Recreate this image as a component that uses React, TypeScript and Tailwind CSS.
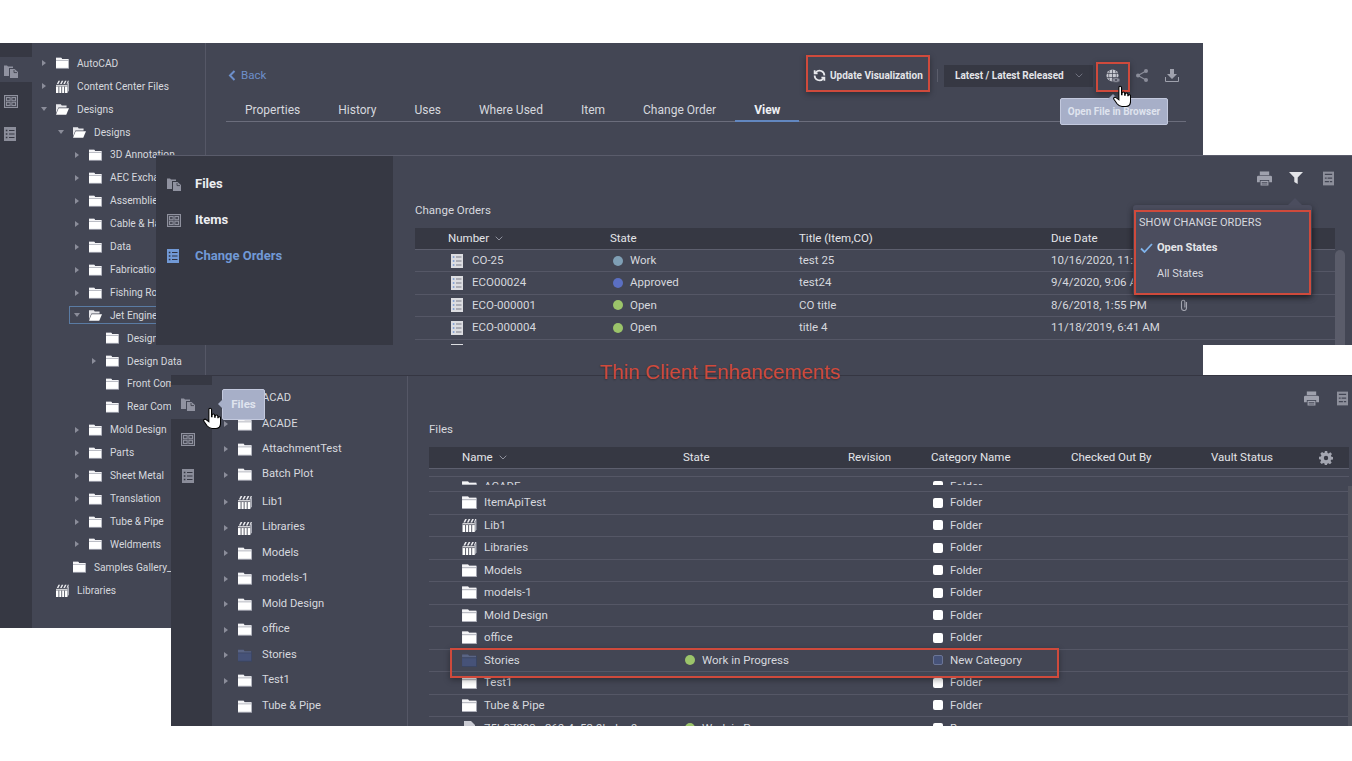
import React from "react";

const FolderIcon = ({ w = 13, h = 12, blue = false }: { w?: number; h?: number; blue?: boolean }) => (
  <svg width={w} height={h} viewBox="0 0 16 14" className="shrink-0">
    <path d="M0 0.5h6.500l1 1.500H16v12H0z" fill={blue ? "#3b4562" : "#a9abb5"} />
    <path d="M0 0.5h6.500l1 1.500H15v1.500H0z" fill={blue ? "#5a6484" : "#f4f4f6"} />
    <path d="M0 4.500h15v8.500H0z" fill={blue ? "#465278" : "#ffffff"} />
  </svg>
);

const OpenFolderIcon = () => (
  <svg width={13} height={11} viewBox="0 0 16 13" className="shrink-0">
    <path d="M0 0h6l1 1.500h6V4H3L0 11z" fill="#e6e6ea" />
    <path d="M3.200 5H16l-3.400 8H0z" fill="#ffffff" />
  </svg>
);

const LibraryIcon = ({ w = 13, h = 13 }: { w?: number; h?: number }) => (
  <svg width={w} height={h} viewBox="0 0 16 16" className="shrink-0">
    <path d="M14 5l2-3v11l-2 3z" fill="#a9abb5" />
    <path d="M0 6h14v10H0z" fill="#fff" />
    <path d="M3.500 8v8M7 8v8M10.500 8v8" stroke="#434654" strokeWidth="1" />
    <path d="M0 7.500h14" stroke="#434654" strokeWidth="0.8" />
    <path d="M1 5l2-4h2L3 5zM5 5l2-4h2L7 5zM9 5l2-4h2l-2 4zM13 5l1.500-4H16l-2 4z" fill="#e9e9ed" />
  </svg>
);

const RailFiles = ({ c = "#9092a0" }: { c?: string }) => (
  <svg width={14} height={13} viewBox="0 0 14 13" className="shrink-0">
    <path d="M0 0.500h3l1 1h5v1.500H5V11H0z" fill={c} />
    <path d="M6 4h4.500L14 7v6H6z" fill={c} />
    <path d="M10 5v2.600h3" stroke="#363843" strokeWidth="0.8" fill="none" />
  </svg>
);

const RailItems = ({ c = "#8f919e" }: { c?: string }) => (
  <svg width={14} height={13} viewBox="0 0 14 13" className="shrink-0">
    <rect x="0.500" y="0.500" width="13" height="12" fill="#4a4c58" stroke={c} />
    <rect x="2.500" y="2.500" width="3.600" height="3.200" fill="none" stroke={c} />
    <rect x="7.900" y="2.500" width="3.600" height="3.200" fill="none" stroke={c} />
    <rect x="2.500" y="7.300" width="3.600" height="3.200" fill="none" stroke={c} />
    <rect x="7.900" y="7.300" width="3.600" height="3.200" fill="none" stroke={c} />
  </svg>
);

const RailOrders = ({ c = "#8b8d9a", k = "#363843" }: { c?: string; k?: string }) => (
  <svg width={12} height={14} viewBox="0 0 12 14" className="shrink-0">
    <rect width="12" height="14" fill={c} />
    <path d="M5 3.500h5.500M5 7h5.500M5 10.500h5.500" stroke={k} strokeWidth="1.200" />
    <path d="M1.800 3.500h1.600M1.800 7h1.600M1.800 10.500h1.600" stroke={k} strokeWidth="1.600" />
  </svg>
);

const RowOrderIcon = () => (
  <svg width={12} height={14} viewBox="0 0 12 14" className="shrink-0">
    <rect width="12" height="14" fill="#dcdde1" />
    <path d="M5 3h5.500M5 7h5.500M5 11h5.500" stroke="#7c7e8a" strokeWidth="1.100" />
    <path d="M1.800 3h1.600M1.800 7h1.600M1.800 11h1.600" stroke="#6f93d0" strokeWidth="1.600" />
  </svg>
);

const Printer = () => (
  <svg width={15} height={15} viewBox="0 0 16 15" className="shrink-0">
    <path d="M3 0h10v4H3z" fill="#9fa1ad" />
    <path d="M1.500 4.500h13A1.500 1.500 0 0 1 16 6v5.500h-3V9H3v2.500H0V6a1.500 1.500 0 0 1 1.500-1.500z" fill="#9fa1ad" />
    <path d="M3.800 10h8.400v5H3.800z" fill="#9fa1ad" />
    <path d="M5 11.800h6M5 13.400h6" stroke="#434654" strokeWidth="0.8" />
  </svg>
);

const ColumnsDoc = () => (
  <svg width={11} height={15} viewBox="0 0 12 15" className="shrink-0">
    <rect width="12" height="15" fill="#8d8f9b" />
    <path d="M2 3h8M2 7h8M2 11h8" stroke="#434654" strokeWidth="1.300" />
    <path d="M7 9.500v3M4.500 5.400v3" stroke="#8d8f9b" strokeWidth="1" />
  </svg>
);

const Funnel = () => (
  <svg width={14} height={12} viewBox="0 0 14 12" className="shrink-0">
    <path d="M0 0h14L8.700 5.600V12L5.300 10V5.600z" fill="#e3e4e8" />
  </svg>
);

const Chev = ({ c = "#8f919d" }: { c?: string }) => (
  <svg width={8} height={5} viewBox="0 0 8 5" className="shrink-0">
    <path d="M0.700 0.700L4 4l3.300-3.300" fill="none" stroke={c} strokeWidth="1" />
  </svg>
);

const Gear = () => (
  <svg width={14} height={14} viewBox="0 0 14 14" className="shrink-0">
    <path
      fillRule="evenodd"
      d="M5.800 0h2.400l.3 1.900 1.200.5L11.300 1.300 13 3l-1.100 1.600.5 1.200 1.600.3v2.400l-1.900.3-.5 1.200 1.100 1.600-1.700 1.700-1.600-1.100-1.200.5-.3 1.700H5.800l-.3-1.900-1.200-.5-1.600 1.100L1 11.300l1.100-1.600-.5-1.200L0 8.200V5.800l1.900-.3.5-1.200L1.300 2.700 3 1l1.600 1.100 1.200-.5zM7 4.800a2.200 2.200 0 1 0 0 4.400 2.200 2.200 0 0 0 0-4.400z"
      fill="#a3a5b0"
    />
  </svg>
);

const Hand = ({ className }: { className: string }) => (
  <svg width={18} height={24} viewBox="0 0 20 25" className={className}>
    <path
      d="M6.500 2a1.500 1.500 0 0 1 3 0v8h.5V8.500a1.500 1.500 0 0 1 3 0V10.500h.5V9.500a1.500 1.500 0 0 1 3 0v1.500h.3a1.400 1.400 0 0 1 2.700 0V17c0 3.500-2 6-5 6H10c-2.500 0-4-1-5.500-3L1 15c-1-1.500 1-3.200 2.400-1.800L6.500 15.500z"
      fill="#fff"
      stroke="#000"
      strokeWidth="1.200"
    />
  </svg>
);

const Arrow = ({ kind }: { kind: "r" | "d" | "n" }) => (
  <span className="flex w-[14px] shrink-0 items-center">
    {kind === "r" && (
      <svg width={4} height={6} viewBox="0 0 4 6">
        <path d="M0 0l4 3-4 3z" fill="#8b8d9a" />
      </svg>
    )}
    {kind === "d" && (
      <svg width={6} height={4} viewBox="0 0 6 4" className="-ml-px">
        <path d="M0 0h6L3 4z" fill="#8b8d9a" />
      </svg>
    )}
  </span>
);

const indent: Record<number, string> = {
  0: "pl-[10px]",
  1: "pl-[27px]",
  2: "pl-[43px]",
  3: "pl-[60px]",
};

type T = [number, "r" | "d" | "n", "f" | "o" | "l", string];

const tree1: T[] = [
  [0, "r", "f", "AutoCAD"],
  [0, "r", "l", "Content Center Files"],
  [0, "d", "o", "Designs"],
  [1, "d", "o", "Designs"],
  [2, "r", "f", "3D Annotation"],
  [2, "r", "f", "AEC Exchange"],
  [2, "r", "f", "Assemblies"],
  [2, "r", "f", "Cable & Harness"],
  [2, "r", "f", "Data"],
  [2, "r", "f", "Fabrication"],
  [2, "r", "f", "Fishing Rod"],
  [2, "d", "o", "Jet Engine"],
  [3, "n", "f", "Design"],
  [3, "r", "f", "Design Data"],
  [3, "n", "f", "Front Component"],
  [3, "n", "f", "Rear Component"],
  [2, "r", "f", "Mold Design"],
  [2, "r", "f", "Parts"],
  [2, "r", "f", "Sheet Metal"],
  [2, "r", "f", "Translation"],
  [2, "r", "f", "Tube & Pipe"],
  [2, "r", "f", "Weldments"],
  [1, "n", "f", "Samples Gallery_2020"],
  [0, "n", "l", "Libraries"],
];

const orders = [
  ["CO-25", "#7f9fb5", "Work", "test 25", "10/16/2020, 11:41 AM", false],
  ["ECO00024", "#5b6fc2", "Approved", "test24", "9/4/2020, 9:06 AM", false],
  ["ECO-000001", "#9bc46a", "Open", "CO title", "8/6/2018, 1:55 PM", true],
  ["ECO-000004", "#9bc46a", "Open", "title 4", "11/18/2019, 6:41 AM", false],
] as const;

const tree3a: ["f", string][] = [
  ["f", "ACAD"],
  ["f", "ACADE"],
  ["f", "AttachmentTest"],
  ["f", "Batch Plot"],
];
const tree3b: ["f" | "l" | "b", string, boolean][] = [
  ["l", "Lib1", true],
  ["l", "Libraries", true],
  ["f", "Models", true],
  ["f", "models-1", true],
  ["f", "Mold Design", true],
  ["f", "office", true],
  ["b", "Stories", true],
  ["f", "Test1", true],
  ["f", "Tube & Pipe", false],
];

const files: ["f" | "l" | "b", string, string, boolean][] = [
  ["f", "ItemApiTest", "Folder", false],
  ["l", "Lib1", "Folder", false],
  ["l", "Libraries", "Folder", false],
  ["f", "Models", "Folder", false],
  ["f", "models-1", "Folder", false],
  ["f", "Mold Design", "Folder", false],
  ["f", "office", "Folder", false],
  ["b", "Stories", "New Category", true],
  ["f", "Test1", "Folder", false],
  ["f", "Tube & Pipe", "Folder", false],
];

const tabs = ["Properties", "History", "Uses", "Where Used", "Item", "Change Order"];

const RedBox = ({ className }: { className: string }) => (
  <div className={`absolute z-40 border-2 border-[#cf4a3c] shadow-[0_2px_6px_rgba(0,0,0,0.35)] ${className}`} />
);

export default function App() {
  return (
    <div className="relative h-[761px] w-[1352px] overflow-hidden bg-white text-[11px] text-[#d6d8de] [font-family:Roboto,sans-serif]">
      {/* Back window */}
      <div className="absolute left-0 top-[43px] z-10 flex h-[585px] w-[1203px] bg-[#434654]">
        <div className="w-[32px] shrink-0 bg-[#363843] pt-[14px]">
          <div className="h-[25px] bg-[#434654] pl-[4px] pt-[8px]">
            <RailFiles />
          </div>
          <div className="h-[32px] pl-[4px] pt-[13px]">
            <RailItems />
          </div>
          <div className="h-[32px] pl-[4px] pt-[13px]">
            <RailOrders />
          </div>
        </div>
        <div className="w-[174px] shrink-0 border-r border-[#555766] pt-[9px]">
          {tree1.map(([lvl, arrow, icon, label], i) => (
            <div key={i} className={`relative flex h-[22.920px] items-center ${indent[lvl]}`}>
              {label === "Jet Engine" && (
                <div className="absolute bottom-[3px] left-[37px] right-0 top-[2px] border border-[#5a7ba3]" />
              )}
              <Arrow kind={arrow} />
              <span className="flex w-[21px] shrink-0">
                {icon === "f" && <FolderIcon />}
                {icon === "o" && <OpenFolderIcon />}
                {icon === "l" && <LibraryIcon />}
              </span>
              <span className="whitespace-nowrap text-[10.200px]">{label}</span>
            </div>
          ))}
        </div>
        <div className="min-w-0 flex-1 pl-[20px] pr-[17px] pt-[14px]">
          <div className="flex h-[37px] items-center">
            <svg width={8} height={11} viewBox="0 0 8 11" className="ml-[2px]">
              <path d="M6.500 1L2 5.500 6.500 10" fill="none" stroke="#6d8fca" strokeWidth="2" />
            </svg>
            <span className="ml-[5px] text-[11.500px] text-[#6d8fca]">Back</span>
            <div className="ml-auto flex w-[117px] items-center gap-[4px]">
              <svg width={13} height={13} viewBox="0 0 24 24" fill="none" stroke="#e8e9ed" strokeWidth="3.200">
                <path d="M21 12a9 9 0 0 0-15.500-6.200L3 8" />
                <path d="M3 2.500V8h5.500" />
                <path d="M3 12a9 9 0 0 0 15.500 6.200L21 16" />
                <path d="M21 21.500V16h-5.500" />
              </svg>
              <span className="whitespace-nowrap text-[10px] font-bold text-[#e4e5e9]">Update Visualization</span>
            </div>
            <div className="ml-[7px] h-[13px] w-px bg-[#5b5d6b]" />
            <div className="ml-[6px] flex h-[22px] w-[149px] items-center justify-between bg-[#363843] pl-[11px] pr-[10px]">
              <span className="whitespace-nowrap text-[10px] font-bold text-[#e4e5e9]">Latest / Latest Released</span>
              <Chev c="#6f717e" />
            </div>
            <div className="ml-[12px] flex w-[16px] justify-center">
              <svg width={14} height={14} viewBox="0 0 14 14">
                <circle cx="6.500" cy="6.500" r="6" fill="#c9cad2" />
                <path d="M0.500 4.500h12M0.500 8.500h12M6.500 0.500v12M3.700 1.500c-1.400 3-1.400 7 0 10M9.300 1.500c1.400 3 1.400 7 0 10" stroke="#434654" strokeWidth="0.700" fill="none" />
                <ellipse cx="10" cy="11" rx="4" ry="2.500" fill="#8b8d9a" stroke="#434654" strokeWidth="0.600" />
                <circle cx="10" cy="11" r="1" fill="#434654" />
              </svg>
            </div>
            <div className="ml-[13px] flex w-[16px] justify-center">
              <svg width={12} height={13} viewBox="0 0 12 13">
                <path d="M10 2L2 6.500l8 4.500" fill="none" stroke="#8b8d9a" strokeWidth="1.200" />
                <circle cx="10" cy="2" r="2" fill="#8b8d9a" />
                <circle cx="2" cy="6.500" r="2" fill="#8b8d9a" />
                <circle cx="10" cy="11" r="2" fill="#8b8d9a" />
              </svg>
            </div>
            <div className="ml-[14px] mr-[6px] flex w-[16px] justify-center">
              <svg width={14} height={13} viewBox="0 0 14 13">
                <path d="M5 0h4v5h3L7 10 2 5h3z" fill="#9fa1ad" />
                <path d="M0.500 8v4.500h13V8" fill="none" stroke="#9fa1ad" />
              </svg>
            </div>
          </div>
          <div className="mt-[5px] flex h-[23px] border-b border-[#6b6d7c]">
            {tabs.map((t) => (
              <span key={t} className="whitespace-nowrap px-[19px] text-[12px] leading-[22px]">
                {t}
              </span>
            ))}
            <span className="-mb-px border-b-2 border-[#6287c0] px-[19px] text-[12px] font-bold leading-[22px] text-[#eef0f4]">
              View
            </span>
          </div>
        </div>
      </div>

      {/* Change orders window */}
      <div className="absolute left-[156px] top-[155px] z-20 flex h-[190px] w-[1196px] overflow-hidden border-t border-[#5a5c6b] bg-[#434654]">
        <div className="w-[237px] shrink-0 bg-[#363843] pl-[11px] pt-[10px]">
          {[
            ["Files", <RailFiles />, "text-[#eceef2]"],
            ["Items", <RailItems />, "text-[#eceef2]"],
            ["Change Orders", <RailOrders c="#7199d6" k="#2f3242" />, "text-[#7199d6]"],
          ].map(([label, icon, cls]) => (
            <div key={label as string} className="flex h-[36px] items-center">
              <span className="flex w-[28px] shrink-0 items-center">{icon}</span>
              <span className={`text-[13px] font-bold ${cls}`}>{label}</span>
            </div>
          ))}
        </div>
        <div className="relative min-w-0 flex-1 pl-[22px]">
          <div className="flex h-[44px] items-center justify-end pr-[18px]">
            <Printer />
            <span className="ml-[17px]">
              <Funnel />
            </span>
            <span className="ml-[20px]">
              <ColumnsDoc />
            </span>
          </div>
          <div className="mb-[10px] mt-[2px] h-[16px] text-[11.500px] leading-[16px]">Change Orders</div>
          <div className="flex">
            <div className="w-[920px] shrink-0">
              <div className="grid h-[22px] grid-cols-[195px_189px_252px_1fr] items-center border-b border-[#5d5f6e] bg-[#363843] text-[11.500px] text-[#e4e5e9]">
                <span className="flex items-center gap-[6px] pl-[33px]">
                  Number <Chev />
                </span>
                <span>State</span>
                <span>Title (Item,CO)</span>
                <span>Due Date</span>
              </div>
              {orders.map(([num, col, st, title, due, clip]) => (
                <div key={num} className="grid h-[22.400px] grid-cols-[195px_189px_252px_1fr] items-center border-b border-[#555766] text-[11.500px]">
                  <span className="flex items-center gap-[9px] pl-[36px]">
                    <RowOrderIcon />
                    {num}
                  </span>
                  <span className="flex items-center gap-[7px] pl-[3px]">
                    <span className="h-[10px] w-[10px] rounded-full" style={{ backgroundColor: col }} />
                    {st}
                  </span>
                  <span>{title}</span>
                  <span className="flex items-center">
                    <span className="w-[129px] whitespace-nowrap">{due}</span>
                    {clip && (
                      <svg width={8} height={12} viewBox="0 0 8 12">
                        <path d="M6.500 3v6a2.500 2.500 0 0 1-5 0V3a1.700 1.700 0 0 1 3.400 0v5.500" fill="none" stroke="#a3a5b0" strokeWidth="1.100" />
                      </svg>
                    )}
                  </span>
                </div>
              ))}
              <div className="pl-[36px] pt-[4px]">
                <div className="h-px w-[12px] bg-[#dcdde1]" />
              </div>
            </div>
            <div className="mt-[22px] h-[100px] w-[10px] shrink-0 rounded-t-[5px] bg-[#5a5c6a]" />
          </div>
        </div>
      </div>

      {/* Filter popover */}
      <div className="absolute left-[1133px] top-[205px] z-30 h-[90px] w-[179px] rounded-[3px] bg-[#4b4d5e] pl-[6px] pt-[10px] shadow-[0_2px_6px_rgba(0,0,0,0.4)]">
        <div className="absolute -top-[7px] left-[155px] h-0 w-0 border-x-[7px] border-b-[7px] border-x-transparent border-b-[#4b4d5e]" />
        <div className="h-[16px] text-[11px] leading-[16px]">SHOW CHANGE ORDERS</div>
        <div className="mt-[9px] flex h-[16px] items-center">
          <svg width={13} height={10} viewBox="0 0 13 10" className="ml-px">
            <path d="M1 5.500L4.500 9 12 1" fill="none" stroke="#7fb2ea" strokeWidth="1.800" />
          </svg>
          <span className="ml-[4px] text-[11px] font-bold text-[#e4e5e9]">Open States</span>
        </div>
        <div className="mt-[10px] flex h-[16px] items-center pl-[18px] text-[11px]">All States</div>
      </div>

      {/* Caption */}
      <div className="absolute left-0 top-[359px] z-30 h-[26px] w-[1440px] text-center text-[20.500px] leading-[26px] text-[#cf4a3c] [font-family:'Liberation_Sans',Arial,sans-serif] [text-shadow:0_1px_2px_rgba(0,0,0,0.3)]">
        Thin Client Enhancements
      </div>

      {/* Files window */}
      <div className="absolute left-[171px] top-[375px] z-20 flex h-[351px] w-[1181px] overflow-hidden border-t border-[#353642] bg-[#434654]">
        <div className="w-[41px] shrink-0 bg-[#363843] pt-[9px]">
          <div className="flex h-[34px] bg-[#434654] pl-[10px] pt-[13px]">
            <RailFiles />
          </div>
          <div className="flex h-[36px] pl-[10px] pt-[14px]">
            <RailItems />
          </div>
          <div className="flex h-[36px] pl-[11px] pt-[14px]">
            <RailOrders />
          </div>
        </div>
        <div className="w-[196px] shrink-0 border-r border-[#555766] pt-[10px]">
          {tree3a.map(([, label]) => (
            <div key={label} className="flex h-[25.400px] items-center pl-[12px]">
              <Arrow kind="r" />
              <span className="mr-[10px] flex">
                <FolderIcon w={14} h={13} />
              </span>
              <span className="whitespace-nowrap text-[11.200px]">{label}</span>
            </div>
          ))}
          <div className="pt-[2px]">
            {tree3b.map(([k, label, arrow]) => (
              <div key={label} className="flex h-[25.500px] items-center pl-[12px]">
                <Arrow kind={arrow ? "r" : "n"} />
                <span className="mr-[10px] flex">
                  {k === "l" ? <LibraryIcon w={14} h={14} /> : <FolderIcon w={14} h={13} blue={k === "b"} />}
                </span>
                <span className="whitespace-nowrap text-[11.200px]">{label}</span>
              </div>
            ))}
          </div>
        </div>
        <div className="relative min-w-0 flex-1 pl-[21px] pr-[3px]">
          <div className="flex h-[44px] items-center justify-end gap-[18px] pr-[1px]">
            <Printer />
            <ColumnsDoc />
          </div>
          <div className="mb-[10px] mt-[1px] h-[16px] text-[11.500px] leading-[16px]">Files</div>
          <div className="grid h-[22px] grid-cols-[254px_165px_83px_140px_140px_1fr] items-center border-b border-[#5d5f6e] bg-[#363843] text-[11.500px] text-[#e4e5e9]">
            <span className="flex items-center gap-[6px] pl-[33px]">
              Name <Chev />
            </span>
            <span>State</span>
            <span>Revision</span>
            <span>Category Name</span>
            <span>Checked Out By</span>
            <span className="flex items-center justify-between pr-[16px]">
              Vault Status <Gear />
            </span>
          </div>
          <div className="h-[8px] border-b border-[#555766]" />
          <div className="grid h-[15px] grid-cols-[254px_165px_83px_140px_140px_1fr] border-b border-[#555766] text-[11.500px]">
            <div className="flex h-[8px] items-start gap-[7px] overflow-hidden pl-[33px] pt-[4px]">
              <FolderIcon w={15} h={13} />
              <span className="-mt-[3px]">ACADE</span>
            </div>
            <span />
            <span />
            <div className="flex h-[8px] items-start gap-[7px] overflow-hidden pl-[2px] pt-[4px]">
              <span className="h-[10px] w-[10px] shrink-0 rounded-[2px] bg-white" />
              <span className="-mt-[3px]">Folder</span>
            </div>
          </div>
          {files.map(([k, name, cat, hi]) => (
            <div key={name} className="grid h-[22.500px] grid-cols-[254px_165px_83px_140px_140px_1fr] items-center border-b border-[#555766] text-[11.500px]">
              <span className="flex items-center gap-[7px] pl-[33px]">
                {k === "l" ? <LibraryIcon w={15} h={14} /> : <FolderIcon w={15} h={13} blue={k === "b"} />}
                {name}
              </span>
              <span className="flex items-center gap-[7px] pl-[2px]">
                {hi && <span className="h-[10px] w-[10px] rounded-full bg-[#9bc46a]" />}
                {hi && "Work in Progress"}
              </span>
              <span />
              <span className="flex items-center gap-[7px] pl-[2px]">
                <span className={`h-[10px] w-[10px] rounded-[2px] ${hi ? "border border-[#6b7596] bg-[#465278]" : "bg-white"}`} />
                {cat}
              </span>
            </div>
          ))}
          <div className="grid h-[22.500px] grid-cols-[254px_165px_83px_140px_140px_1fr] items-center text-[11.500px]">
            <span className="flex items-center gap-[7px] pl-[33px]">
              <svg width={15} height={14} viewBox="0 0 15 14" className="shrink-0">
                <path d="M2 0h7l4 4v10H2z" fill="#c9cad2" />
              </svg>
              75b37023-c360-4c53-9bab-c9
            </span>
            <span className="flex items-center gap-[7px] pl-[2px]">
              <span className="h-[10px] w-[10px] rounded-full bg-[#9bc46a]" />
              Work in Progress
            </span>
            <span />
            <span className="flex items-center gap-[7px] pl-[2px]">
              <span className="h-[10px] w-[10px] rounded-[2px] bg-white" />
              Base
            </span>
          </div>
          <div className="absolute bottom-0 right-0 top-[110px] w-[4px] bg-[#52545f]" />
        </div>
      </div>

      {/* Annotations and tooltips */}
      <RedBox className="left-[806px] top-[55px] h-[37px] w-[124px]" />
      <RedBox className="left-[1096px] top-[62px] h-[30px] w-[34px]" />
      <RedBox className="left-[1134px] top-[210px] h-[85px] w-[177px]" />
      <RedBox className="left-[450px] top-[648px] h-[30px] w-[609px]" />

      <div className="absolute left-[1060px] top-[98px] z-30 flex h-[27px] w-[108px] items-center justify-center rounded-[2px] border border-[#c3c9de] bg-[#a7afc8] text-[10px] font-bold text-[#dfe3ee]">
        <div className="absolute -top-[5px] left-[47px] h-0 w-0 border-x-[5px] border-b-[5px] border-x-transparent border-b-[#a7afc8]" />
        Open File in Browser
      </div>
      <Hand className="absolute left-[1113px] top-[85px] z-50" />

      <div className="absolute left-[222px] top-[389px] z-30 flex h-[31px] w-[43px] items-center justify-center rounded-[2px] border border-[#c3c9de] bg-[#a7afc8] text-[11.500px] font-bold text-[#dfe3ee]">
        <div className="absolute -left-[5px] top-[9px] h-0 w-0 border-y-[5px] border-r-[5px] border-y-transparent border-r-[#a7afc8]" />
        Files
      </div>
      <Hand className="absolute left-[203px] top-[407px] z-50" />
    </div>
  );
}
